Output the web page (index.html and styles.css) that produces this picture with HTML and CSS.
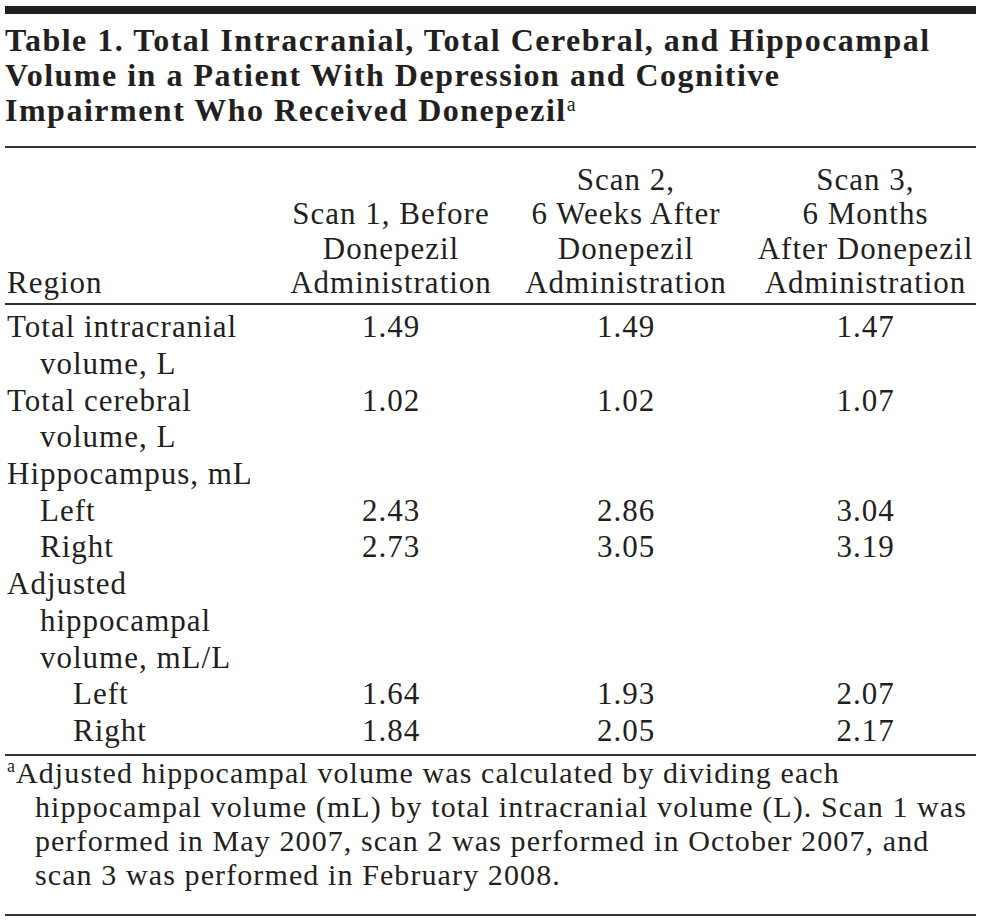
FILE: index.html
```html
<!DOCTYPE html>
<html lang="en">
<head>
<meta charset="utf-8">
<title>Table 1</title>
<link rel="stylesheet" href="styles.css">
</head>
<body>
<div class="page">
  <div class="topbar"></div>
  <h1 class="title">Table 1. Total Intracranial, Total Cerebral, and Hippocampal<br>Volume in a Patient With Depression and Cognitive<br>Impairment Who Received Donepezil<sup class="title-sup">a</sup></h1>
  <div class="rule"></div>
  <div class="grid head">
    <div class="cell region">Region</div>
    <div class="cell num">Scan 1, Before<br>Donepezil<br>Administration</div>
    <div class="cell num">Scan 2,<br>6 Weeks After<br>Donepezil<br>Administration</div>
    <div class="cell num">Scan 3,<br>6 Months<br>After Donepezil<br>Administration</div>
  </div>
  <div class="rule"></div>
  <div class="body">
    <div class="grid row">
      <div class="cell region hang">Total intracranial<br>volume, L</div>
      <div class="cell num">1.49</div>
      <div class="cell num">1.49</div>
      <div class="cell num">1.47</div>
    </div>
    <div class="grid row">
      <div class="cell region hang">Total cerebral<br>volume, L</div>
      <div class="cell num">1.02</div>
      <div class="cell num">1.02</div>
      <div class="cell num">1.07</div>
    </div>
    <div class="grid row">
      <div class="cell region">Hippocampus, mL</div>
      <div class="cell num"></div>
      <div class="cell num"></div>
      <div class="cell num"></div>
    </div>
    <div class="grid row">
      <div class="cell region lvl1">Left</div>
      <div class="cell num">2.43</div>
      <div class="cell num">2.86</div>
      <div class="cell num">3.04</div>
    </div>
    <div class="grid row">
      <div class="cell region lvl1">Right</div>
      <div class="cell num">2.73</div>
      <div class="cell num">3.05</div>
      <div class="cell num">3.19</div>
    </div>
    <div class="grid row">
      <div class="cell region hang">Adjusted<br>hippocampal<br>volume, mL/L</div>
      <div class="cell num"></div>
      <div class="cell num"></div>
      <div class="cell num"></div>
    </div>
    <div class="grid row">
      <div class="cell region lvl2">Left</div>
      <div class="cell num">1.64</div>
      <div class="cell num">1.93</div>
      <div class="cell num">2.07</div>
    </div>
    <div class="grid row">
      <div class="cell region lvl2">Right</div>
      <div class="cell num">1.84</div>
      <div class="cell num">2.05</div>
      <div class="cell num">2.17</div>
    </div>
  </div>
  <div class="rule"></div>
  <p class="foot"><sup class="foot-sup">a</sup>Adjusted hippocampal volume was calculated by dividing each<br>hippocampal volume (mL) by total intracranial volume (L). Scan 1 was<br>performed in May 2007, scan 2 was performed in October 2007, and<br>scan 3 was performed in February 2008.</p>
  <div class="rule"></div>
</div>
</body>
</html>
```

FILE: styles.css
```css
html, body {
  margin: 0;
  padding: 0;
  background: #ffffff;
}

body {
  color: #231f20;
  font-family: "Liberation Serif", "Times New Roman", serif;
}

.page {
  margin: 6px 0 0 5px;
  width: 971px;
}

.topbar {
  height: 8px;
  background: #231f20;
}

.title {
  margin: 0;
  padding: 9px 0 18px 0;
  font-size: 32px;
  line-height: 35px;
  font-weight: bold;
  letter-spacing: 1.5px;
  white-space: nowrap;
}

.title-sup {
  font-size: 20px;
  line-height: 0;
  vertical-align: 10px;
  font-weight: normal;
  letter-spacing: 0;
}

.rule {
  height: 2px;
  background: #333333;
}

.grid {
  display: grid;
  grid-template-columns: 280px 212px 258px 221px;
}

.cell {
  font-size: 31px;
  letter-spacing: 1px;
  white-space: nowrap;
}

.num {
  text-align: center;
}

.region {
  padding-left: 2px;
}

.head {
  align-items: end;
  padding: 15px 0 3px 0;
}

.head .cell {
  line-height: 34.3px;
}

.body {
  padding: 4px 0 4px 0;
}

.row {
  align-items: start;
}

.row .cell {
  line-height: 36.7px;
}

.hang {
  padding-left: 35px;
  text-indent: -33px;
}

.lvl1 {
  padding-left: 35px;
}

.lvl2 {
  padding-left: 68px;
}

.foot {
  margin: 0;
  padding: 0 0 22px 30px;
  text-indent: -28px;
  font-size: 30px;
  line-height: 34px;
  letter-spacing: 1.1px;
  white-space: nowrap;
}

.foot-sup {
  font-size: 18px;
  line-height: 0;
  vertical-align: 11px;
  letter-spacing: 0;
  margin-right: 1px;
}
```
